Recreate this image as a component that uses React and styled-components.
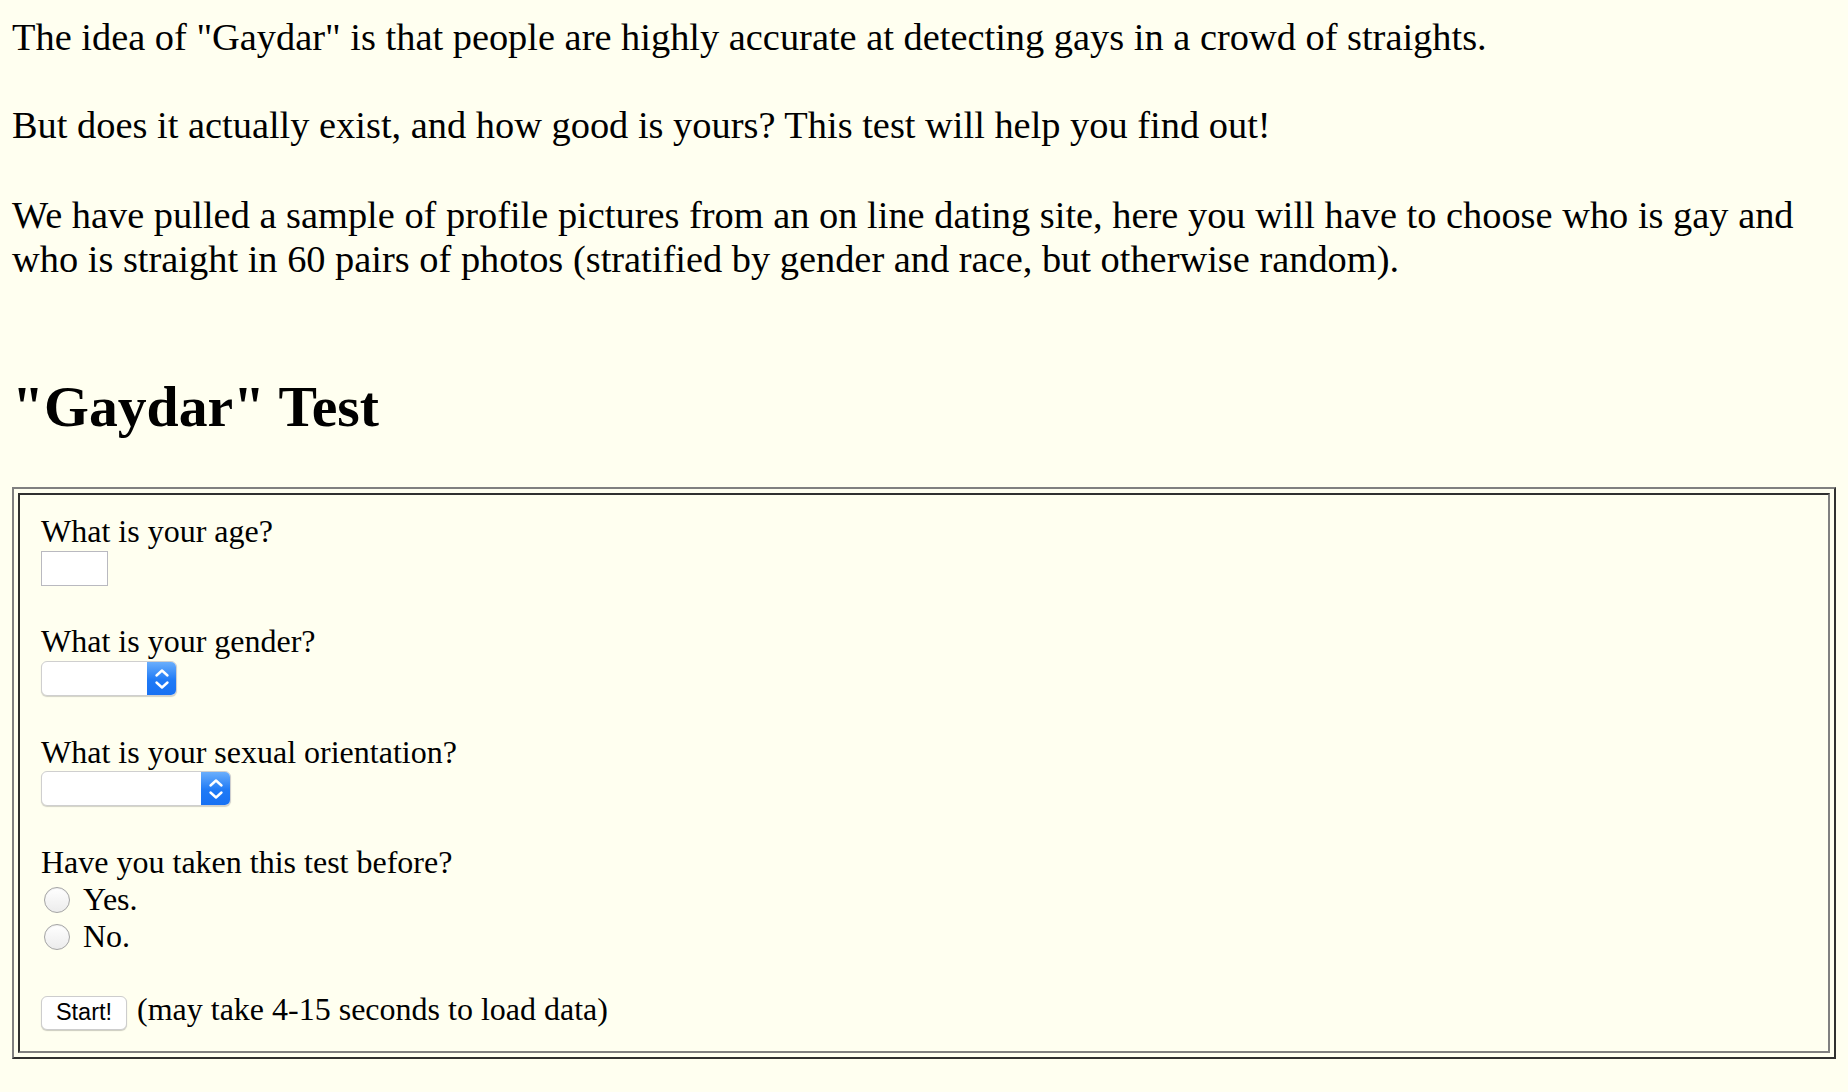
import React from "react";
import styled, { createGlobalStyle } from "styled-components";

const GlobalStyle = createGlobalStyle`
  body {
    margin: 0;
    background: #fffff0;
    color: #000;
    font-family: "Liberation Serif", "Times New Roman", serif;
  }
`;

const Page = styled.div`
  padding: 15px 12px 40px;
`;

const Para = styled.p`
  margin: 0 0 ${(p) => p.gap}px;
  font-size: 38.4px;
  line-height: 44px;
`;

const Title = styled.h2`
  margin: 0 0 47.5px;
  font-size: 57.7px;
  line-height: 64px;
  font-weight: bold;
`;

const Frame = styled.div`
  border: 2px solid;
  border-color: #808080 #303030 #303030 #808080;
  padding: 4px;
`;

const Cell = styled.div`
  border: 2px solid;
  border-color: #303030 #808080 #808080 #303030;
  padding: 18.5px 21px 23px;
  font-size: 32px;
  line-height: 36.8px;
`;

const Question = styled.div`
  margin-bottom: 36.8px;
`;

const Line = styled.div`
  display: flex;
  align-items: center;
  height: 36.8px;
  white-space: nowrap;
`;

const AgeInput = styled.div`
  width: 65px;
  height: 33px;
  background: #fff;
  border: 1px solid #b9b9c0;
`;

const SelectBox = styled.div`
  display: flex;
  width: ${(p) => p.width}px;
  height: 33px;
  border-radius: 6px;
  background: #fff;
  border: 1px solid #cfcfcf;
  box-shadow: 0 1px 1px rgba(0, 0, 0, 0.18);
  overflow: hidden;
`;

const SelectField = styled.div`
  flex: 1;
`;

const Knob = styled.div`
  width: 29px;
  display: flex;
  align-items: center;
  justify-content: center;
  background: linear-gradient(#6aaefc, #1f7af6 55%, #1771f3);
`;

const Radio = styled.span`
  box-sizing: border-box;
  width: 26px;
  height: 26px;
  margin: 2px 13px 0 3px;
  border-radius: 50%;
  border: 1px solid #a4a4a4;
  background: linear-gradient(#ffffff, #ececec);
  box-shadow: inset 0 1px 1px rgba(0, 0, 0, 0.06);
`;

const Button = styled.span`
  box-sizing: border-box;
  display: inline-flex;
  align-items: center;
  justify-content: center;
  width: 86px;
  height: 34px;
  margin-top: 6px;
  margin-right: 10px;
  border: 1px solid #cdcdcd;
  border-radius: 6px;
  background: #fff;
  box-shadow: 0 1px 1px rgba(0, 0, 0, 0.2);
  font-family: "Liberation Sans", Arial, sans-serif;
  font-size: 23.5px;
  line-height: 1;
`;

function Select({ width }) {
  return (
    <SelectBox width={width}>
      <SelectField />
      <Knob>
        <svg width="16" height="24" viewBox="0 0 16 24">
          <path
            d="M2.5 8.5 L8 3.5 L13.5 8.5 M2.5 15.5 L8 20.5 L13.5 15.5"
            fill="none"
            stroke="#fff"
            strokeWidth="2.4"
            strokeLinecap="round"
            strokeLinejoin="round"
          />
        </svg>
      </Knob>
    </SelectBox>
  );
}

export default function App() {
  return (
    <Page>
      <GlobalStyle />
      <Para gap={43.5}>
        The idea of "Gaydar" is that people are highly accurate at detecting
        gays in a crowd of straights.
      </Para>
      <Para gap={46}>
        But does it actually exist, and how good is yours? This test will help
        you find out!
      </Para>
      <Para gap={94.5}>
        We have pulled a sample of profile pictures from an on line dating
        site, here you will have to choose who is gay and who is straight in 60
        pairs of photos (stratified by gender and race, but otherwise random).
      </Para>
      <Title>"Gaydar" Test</Title>
      <Frame>
        <Cell>
          <Question>
            <Line>What is your age?</Line>
            <Line>
              <AgeInput />
            </Line>
          </Question>
          <Question>
            <Line>What is your gender?</Line>
            <Line>
              <Select width={134} />
            </Line>
          </Question>
          <Question>
            <Line>What is your sexual orientation?</Line>
            <Line>
              <Select width={188} />
            </Line>
          </Question>
          <Question>
            <Line>Have you taken this test before?</Line>
            <Line>
              <Radio />
              Yes.
            </Line>
            <Line>
              <Radio />
              No.
            </Line>
          </Question>
          <Line>
            <Button>Start!</Button>
            (may take 4-15 seconds to load data)
          </Line>
        </Cell>
      </Frame>
    </Page>
  );
}
